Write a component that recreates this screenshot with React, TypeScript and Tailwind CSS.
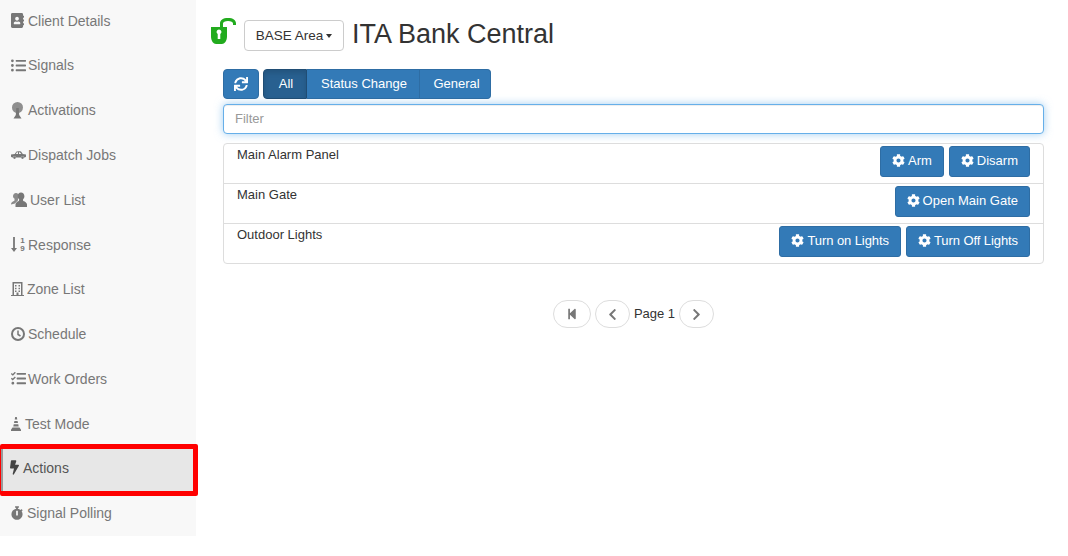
import React from "react";
import { FaAddressBook, FaListUl, FaTasks, FaBolt, FaStopwatch, FaSync, FaCog, FaStepBackward, FaChevronLeft, FaChevronRight } from "react-icons/fa";

const Tree = () => (
  <svg width="13" height="17" viewBox="0 0 13 17" fill="currentColor">
    <circle cx="6.500" cy="5.500" r="5.500" fill="#8f8f8f" />
    <path d="M5.300 6h2.400l.5 7 2.300 3.500H2.500L4.800 13z" />
  </svg>
);
const Car = () => (
  <svg width="15" height="8" viewBox="0 0 15 8" fill="currentColor">
    <path fillRule="evenodd" d="M0 3.500 3.800 3 5.300.8C5.800.2 9 0 10 .6L11.800 3l3.200.6v2.200l-1.200.7h-.6a1.700 1.700 0 0 0-3.300 0H5.100a1.700 1.700 0 0 0-3.300 0h-.6L0 5.800zM5 3h2V1.300c-.7 0-1.100.1-1.300.3zM8 3h2.400L9 1.400c-.2-.1-.6-.1-1-.1z" />
    <circle cx="3.500" cy="6.600" r="1.300" />
    <circle cx="11.500" cy="6.600" r="1.300" />
  </svg>
);
const Users = () => (
  <svg width="16" height="15" viewBox="0 0 16 15" fill="currentColor">
    <path d="M5 1c1.700 0 3 1.300 3 3.200 0 1-.5 2-1.100 2.600l.2 1.400L4 11.500 0 12.500c0-2 1.200-3 3.400-3.800l.2-1.900C2.700 6.200 2 5.300 2 4.200 2 2.300 3.300 1 5 1z" opacity=".85" />
    <path d="M10 .5c2 0 3.400 1.600 3.400 3.700 0 1.300-.6 2.500-1.400 3.200l.2 1.500c2.200.7 3.800 1.800 3.800 3.600V15H4.500v-2.500c0-1.800 1.500-2.900 3.400-3.600l.3-1.500C7.300 6.700 6.700 5.500 6.700 4.200 6.700 2.100 8 .5 10 .5z" />
  </svg>
);
const Response = () => (
  <span className="flex items-center">
    <svg width="6" height="15" viewBox="0 0 6 15" fill="currentColor">
      <path d="M2.100 0h1.800v11H6l-3 4-3-4h2.100z" />
    </svg>
    <span className="flex flex-col items-center text-[8px] leading-[8px] ml-[3px] w-[5px] font-bold">
      <span>1</span>
      <span>9</span>
    </span>
  </span>
);
const Building = () => (
  <svg width="13" height="14" viewBox="0 0 13 14" fill="currentColor">
    <path fillRule="evenodd" d="M1.500 0h10v13H13v1H0v-1h1.500zM3 1.500v11.500h2.500v-2.500h2V13H10V1.500z" />
    <path d="M4 3h1.500v1.500H4zM7.500 3H9v1.500H7.500zM4 5.800h1.500v1.500H4zM7.500 5.800H9v1.500H7.500zM4 8.500h1.500V10H4zM7.500 8.500H9V10H7.500z" />
  </svg>
);
const Clock = () => (
  <svg width="14" height="14" viewBox="0 0 14 14" fill="none" stroke="currentColor">
    <circle cx="7" cy="7" r="6" strokeWidth="2" />
    <path d="M7 3.500V7.500L9.500 9" strokeWidth="1.500" />
  </svg>
);
const Cone = () => (
  <svg width="10" height="14" viewBox="0 0 10 14" fill="currentColor">
    <path d="M4.200 0h1.600l.5 2.500H3.700zM3.400 4h3.200l.4 2H3zM2.700 7.300h4.600l.4 2.200H2.300zM1.500 10.500h7l1.500 2.300V14H0v-1.200z" />
  </svg>
);
const OpenLock = () => (
  <svg width="27" height="27" viewBox="0 0 27 27" className="text-[#22ab1e]" fill="currentColor">
    <path fillRule="evenodd" d="M1 9h16v9.500C17 23 14.500 26 12 26H6c-2.500 0-5-3-5-7.500zm8 2.500a2.500 2.500 0 0 0-1.300 4.600V21h2.600v-4.900A2.500 2.500 0 0 0 9 11.500z" />
    <path d="M10 9V5.500C10 2 13 0 18 0s8 2 8 5.500V7h-3V5.500C23 4 21 3 18 3s-5 1-5 2.500V9z" />
  </svg>
);

const items: { label: string; icon: React.ReactNode; box: string; active?: boolean }[] = [
  { label: "Client Details", icon: <FaAddressBook className="w-[13px] h-[15px]" />, box: "w-[17px]" },
  { label: "Signals", icon: <FaListUl size={15} />, box: "w-[17px]" },
  { label: "Activations", icon: <Tree />, box: "w-[17px]" },
  { label: "Dispatch Jobs", icon: <Car />, box: "w-[17px]" },
  { label: "User List", icon: <Users />, box: "w-[19px]" },
  { label: "Response", icon: <Response />, box: "w-[17px]" },
  { label: "Zone List", icon: <Building />, box: "w-[16px]" },
  { label: "Schedule", icon: <Clock />, box: "w-[17px]" },
  { label: "Work Orders", icon: <FaTasks size={15} />, box: "w-[17px]" },
  { label: "Test Mode", icon: <Cone />, box: "w-[14px]" },
  { label: "Actions", icon: <FaBolt className="w-[9px] h-[15px]" />, box: "w-[13px]", active: true },
  { label: "Signal Polling", icon: <FaStopwatch className="w-[12px] h-[14px]" />, box: "w-[16px]" },
];

const Btn = ({ label, tight }: { label: string; tight?: boolean }) => (
  <button className={`h-[31px] px-[11px] pb-[2px] flex items-center gap-[3px] rounded-[3px] bg-[#337ab7] border border-[#2e6da4] text-white text-[13px] ${tight ? "tracking-[-0.08px]" : ""}`}>
    <FaCog size={13} />
    {label}
  </button>
);

const rows = [
  { name: "Main Alarm Panel", actions: ["Arm", "Disarm"], h: "h-[39px]" },
  { name: "Main Gate", actions: ["Open Main Gate"], h: "h-[40px] border-t border-[#dddddd]" },
  { name: "Outdoor Lights", actions: ["Turn on Lights", "Turn Off Lights"], h: "h-[40px] border-t border-[#dddddd]", tight: true },
];

const Round = ({ w, children }: { w: string; children: React.ReactNode }) => (
  <button className={`${w} h-[28px] rounded-[14px] border border-[#dddddd] bg-white flex items-center justify-center text-[#777]`}>
    {children}
  </button>
);

export default function App() {
  return (
    <div className="flex h-[556px] w-[1068px] overflow-hidden bg-white text-[13px] leading-[20px] text-[#333] font-['Liberation_Sans',Arial,sans-serif]">
      <aside className="w-[196px] h-[536px] shrink-0 bg-[#f8f8f8] text-[14px]">
        <div className="flex flex-col -mt-[1.800px]">
          {items.map((it) =>
            it.active ? (
              <div key={it.label} className="h-[44.800px] relative">
                <div className="absolute left-0 -right-[2px] -top-[2px] h-[52px] rounded-[2px] border-y-[5px] border-r-[5px] border-l border-[#ff0000] bg-[#e7e7e7]">
                  <div className="h-full w-[2px] bg-[#9a9a9a]" />
                </div>
                <div className="absolute left-0 right-0 -top-[1px] h-full pl-[10px] flex items-center text-[#555]">
                  <span className={`${it.box} shrink-0 flex items-center text-[#444]`}>{it.icon}</span>
                  <span>{it.label}</span>
                </div>
              </div>
            ) : (
              <div key={it.label} className="h-[44.800px] pl-[11px] flex items-center text-[#777]">
                <span className={`${it.box} shrink-0 flex items-center`}>{it.icon}</span>
                <span>{it.label}</span>
              </div>
            )
          )}
        </div>
      </aside>
      <main className="flex-1 min-w-0 pl-[27px] pr-[24px]">
        <div className="flex items-start -ml-[13px] h-[32px] mt-[18px]">
          <OpenLock />
          <button className="ml-[7px] mt-[2px] h-[31px] w-[100px] flex items-center justify-center gap-[3px] rounded-[4px] border border-[#cccccc] bg-white text-[#333] text-[13.500px]">
            BASE Area
            <span className="border-x-[3.500px] border-x-transparent border-t-[4px] border-t-[#333] mt-[1px]" />
          </button>
          <h1 className="ml-[8px] text-[27px] leading-[32px] text-[#333]">ITA Bank Central</h1>
        </div>
        <div className="flex gap-[4px] mt-[19px] text-white">
          <button className="w-[36px] h-[30px] rounded-[4px] bg-[#337ab7] border border-[#2e6da4] flex items-center justify-center">
            <FaSync size={14} />
          </button>
          <div className="flex h-[30px]">
            <button className="w-[44px] pl-[2px] rounded-l-[4px] bg-[#286090] border border-[#204d74] shadow-[inset_0_3px_5px_rgba(0,0,0,0.125)]">All</button>
            <button className="w-[113px] pl-[2px] bg-[#337ab7] border-y border-r border-[#2e6da4]">Status Change</button>
            <button className="w-[71px] pl-[3px] rounded-r-[4px] bg-[#337ab7] border-y border-r border-[#2e6da4]">General</button>
          </div>
        </div>
        <input
          placeholder="Filter"
          className="block mt-[5px] w-full h-[30px] px-[11px] pb-[2px] rounded-[4px] border border-[#66afe9] bg-white outline-none shadow-[inset_0_1px_1px_rgba(0,0,0,0.075),0_0_8px_rgba(102,175,233,0.6)] placeholder:text-[#999]"
        />
        <div className="mt-[9px] rounded-[4px] border border-[#dddddd]">
          {rows.map((r) => (
            <div key={r.name} className={`flex justify-between px-[13px] ${r.h}`}>
              <span className="mt-[1px]">{r.name}</span>
              <div className="flex gap-[5px] mt-[2px]">
                {r.actions.map((a) => (
                  <Btn key={a} label={a} tight={r.tight} />
                ))}
              </div>
            </div>
          ))}
        </div>
        <div className="flex items-center justify-center gap-[4px] mt-[36px]">
          <Round w="w-[38px]"><FaStepBackward size={12} /></Round>
          <Round w="w-[35px]"><FaChevronLeft size={13} /></Round>
          <span>Page 1</span>
          <Round w="w-[35px]"><FaChevronRight size={13} /></Round>
        </div>
      </main>
    </div>
  );
}
